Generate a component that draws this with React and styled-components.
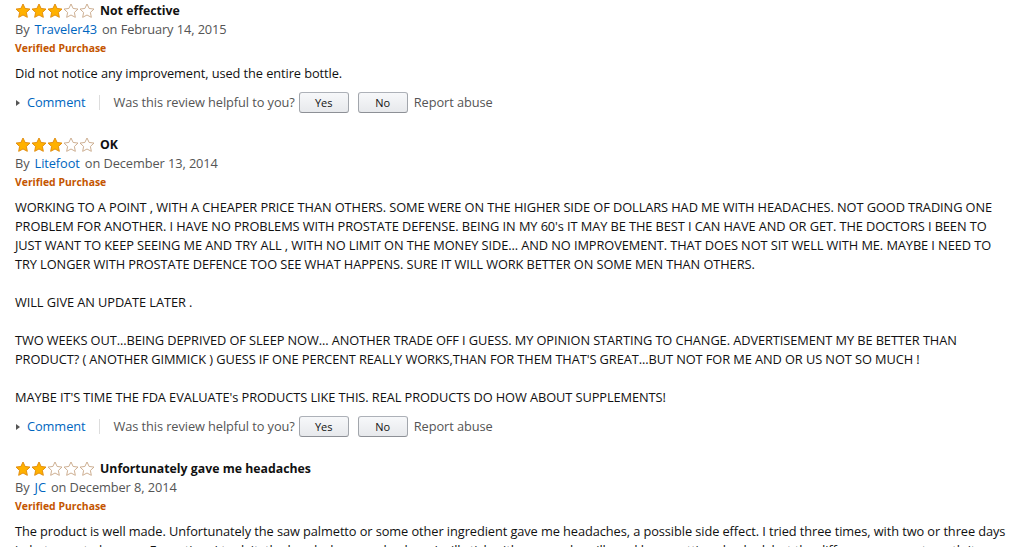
import React from 'react';
import styled, { createGlobalStyle } from 'styled-components';

const GlobalStyle = createGlobalStyle`
  body {
    margin: 0;
    background: #fff;
    font-family: 'Open Sans', 'Noto Sans', Arial, sans-serif;
    color: #111;
  }
`;

const Page = styled.div`
  padding: 1px 12px 0 15px;
  font-size: 12.8px;
  line-height: 19px;
  letter-spacing: -0.08px;
`;

const Review = styled.div`
  margin-bottom: 23px;
`;

const TitleRow = styled.div`
  display: flex;
  align-items: center;
  gap: 5px;
  height: 19px;
`;

const Stars = styled.div`
  display: flex;
  width: 80px;
`;

const Title = styled.span`
  font-weight: bold;
  font-size: 12.3px;
  letter-spacing: 0;
`;

const Byline = styled.div`
  color: #555;
  height: 19px;
`;

const Author = styled.a`
  color: #0066c0;
  text-decoration: none;
  margin: 0 5px 0 5px;
`;

const Verified = styled.div`
  color: #c45500;
  font-weight: bold;
  font-size: 10.4px;
  height: 19px;
  letter-spacing: 0;
`;

const Body = styled.div`
  margin-top: 6px;
  p {
    margin: 0 0 19px 0;
  }
  p:last-child {
    margin-bottom: 0;
  }
`;

const Actions = styled.div`
  display: flex;
  align-items: center;
  margin-top: 10px;
  height: 19px;
  color: #555;
`;

const Toggle = styled.span`
  display: flex;
  align-items: center;
  color: #0066c0;
  &::before {
    content: '';
    width: 0;
    height: 0;
    border-top: 3px solid transparent;
    border-bottom: 3px solid transparent;
    border-left: 4px solid #555;
    margin: 0 7px 0 1px;
  }
`;

const Divider = styled.span`
  width: 1px;
  height: 15px;
  background: #ddd;
  margin: 0 14px 0 13px;
`;

const VoteButton = styled.button`
  width: 50px;
  height: 21px;
  margin: 0 3px 0 ${p => p.$gap}px;
  padding: 0;
  border: 1px solid #adb1b8;
  border-color: #adb1b8 #a2a6ac #8d9096;
  border-radius: 3px;
  background: linear-gradient(to bottom, #f7f8fa, #e7e9ec);
  font-family: 'Open Sans', 'Noto Sans', Arial, sans-serif;
  font-size: 11px;
  color: #111;
`;

const Report = styled.span`
  margin-left: 3px;
`;

function Star({ filled }) {
  return (
    <svg width="16" height="16" viewBox="0 0 24 24">
      <path
        d="M12 1.5l3.2 6.7 7.3.9-5.4 5.1 1.4 7.3L12 18l-6.5 3.5 1.4-7.3-5.4-5.1 7.3-.9z"
        fill={filled ? '#ffb100' : '#fff'}
        stroke={filled ? '#e08a0a' : '#c9a98a'}
        strokeWidth="1.4"
        strokeLinejoin="round"
      />
    </svg>
  );
}

function Rating({ value }) {
  return (
    <Stars>
      {[1, 2, 3, 4, 5].map(i => (
        <Star key={i} filled={i <= value} />
      ))}
    </Stars>
  );
}

const reviews = [
  {
    rating: 3,
    title: 'Not effective',
    author: 'Traveler43',
    date: 'February 14, 2015',
    body: ['Did not notice any improvement, used the entire bottle.'],
  },
  {
    rating: 3,
    title: 'OK',
    author: 'Litefoot',
    date: 'December 13, 2014',
    body: [
      "WORKING TO A POINT , WITH A CHEAPER PRICE THAN OTHERS. SOME WERE ON THE HIGHER SIDE OF DOLLARS HAD ME WITH HEADACHES. NOT GOOD TRADING ONE PROBLEM FOR ANOTHER. I HAVE NO PROBLEMS WITH PROSTATE DEFENSE. BEING IN MY 60's IT MAY BE THE BEST I CAN HAVE AND OR GET. THE DOCTORS I BEEN TO JUST WANT TO KEEP SEEING ME AND TRY ALL , WITH NO LIMIT ON THE MONEY SIDE... AND NO IMPROVEMENT. THAT DOES NOT SIT WELL WITH ME. MAYBE I NEED TO TRY LONGER WITH PROSTATE DEFENCE TOO SEE WHAT HAPPENS. SURE IT WILL WORK BETTER ON SOME MEN THAN OTHERS.",
      'WILL GIVE AN UPDATE LATER .',
      "TWO WEEKS OUT...BEING DEPRIVED OF SLEEP NOW... ANOTHER TRADE OFF I GUESS. MY OPINION STARTING TO CHANGE. ADVERTISEMENT MY BE BETTER THAN PRODUCT? ( ANOTHER GIMMICK ) GUESS IF ONE PERCENT REALLY WORKS,THAN FOR THEM THAT'S GREAT...BUT NOT FOR ME AND OR US NOT SO MUCH !",
      "MAYBE IT'S TIME THE FDA EVALUATE's PRODUCTS LIKE THIS. REAL PRODUCTS DO HOW ABOUT SUPPLEMENTS!",
    ],
  },
  {
    rating: 2,
    title: 'Unfortunately gave me headaches',
    author: 'JC',
    date: 'December 8, 2014',
    body: [
      'The product is well made. Unfortunately the saw palmetto or some other ingredient gave me headaches, a possible side effect. I tried three times, with two or three days in between to be sure. Every time I took it, the headache came back, so I will stick with my regular pills and keep getting checked, but the difference was not worth it.',
    ],
  },
];

export default function App() {
  return (
    <>
      <GlobalStyle />
      <Page>
        {reviews.map(r => (
          <Review key={r.author}>
            <TitleRow>
              <Rating value={r.rating} />
              <Title>{r.title}</Title>
            </TitleRow>
            <Byline>
              By<Author href="#">{r.author}</Author>on {r.date}
            </Byline>
            <Verified>Verified Purchase</Verified>
            <Body>
              {r.body.map((t, i) => (
                <p key={i}>{t}</p>
              ))}
            </Body>
            <Actions>
              <Toggle>Comment</Toggle>
              <Divider />
              <span>Was this review helpful to you?</span>
              <VoteButton $gap={4}>Yes</VoteButton>
              <VoteButton $gap={6}>No</VoteButton>
              <Report>Report abuse</Report>
            </Actions>
          </Review>
        ))}
      </Page>
    </>
  );
}
